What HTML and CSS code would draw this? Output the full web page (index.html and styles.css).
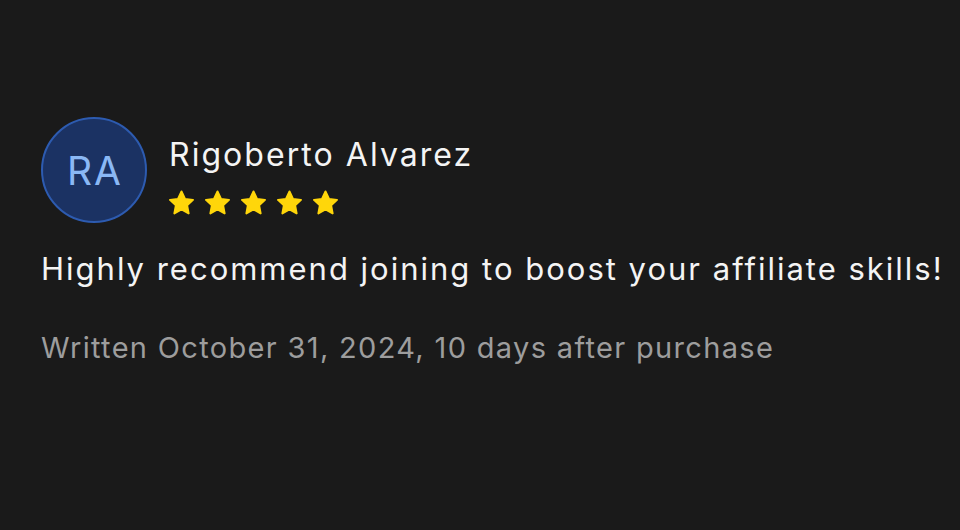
FILE: index.html
```html
<!DOCTYPE html>
<html>

<head>
  <title>Review</title>
  <link rel="stylesheet" href="styles.css">
</head>

<body>
  <div class="review">
    <div class="review-head">
      <div class="avatar">RA</div>
      <div class="author">
        <div class="author-name">Rigoberto Alvarez</div>
        <div class="stars">
          <svg class="star" viewBox="2 1.6 20 20"><path d="M12 2.8l2.8 5.9 6.4.8-4.7 4.4 1.2 6.4L12 17.1l-5.7 3.2 1.2-6.4-4.7-4.4 6.4-.8z"/></svg>
          <svg class="star" viewBox="2 1.6 20 20"><path d="M12 2.8l2.8 5.9 6.4.8-4.7 4.4 1.2 6.4L12 17.1l-5.7 3.2 1.2-6.4-4.7-4.4 6.4-.8z"/></svg>
          <svg class="star" viewBox="2 1.6 20 20"><path d="M12 2.8l2.8 5.9 6.4.8-4.7 4.4 1.2 6.4L12 17.1l-5.7 3.2 1.2-6.4-4.7-4.4 6.4-.8z"/></svg>
          <svg class="star" viewBox="2 1.6 20 20"><path d="M12 2.8l2.8 5.9 6.4.8-4.7 4.4 1.2 6.4L12 17.1l-5.7 3.2 1.2-6.4-4.7-4.4 6.4-.8z"/></svg>
          <svg class="star" viewBox="2 1.6 20 20"><path d="M12 2.8l2.8 5.9 6.4.8-4.7 4.4 1.2 6.4L12 17.1l-5.7 3.2 1.2-6.4-4.7-4.4 6.4-.8z"/></svg>
        </div>
      </div>
    </div>
    <p class="review-text">Highly recommend joining to boost your affiliate skills!</p>
    <p class="review-meta">Written October 31, 2024, 10 days after purchase</p>
  </div>
</body>

</html>
```

FILE: styles.css
```css
body {
  margin: 0;
  background-color: #1a1a1a;
  color: #f2f2f2;
  font-family: 'Inter', 'Noto Sans', sans-serif;
}

.review {
  padding: 117px 0 0 41px;
}

/* Header: avatar + name and stars */
.review-head {
  display: flex;
  align-items: flex-start;
  gap: 22px;
}

.avatar {
  width: 102px;
  height: 102px;
  border-radius: 50%;
  background-color: #1b3263;
  border: 2px solid #2d5bb0;
  color: #8ab8f5;
  font-size: 39px;
  letter-spacing: 2px;
  text-indent: 2px;
  display: flex;
  align-items: center;
  justify-content: center;
  flex-shrink: 0;
}

.author {
  margin-top: 19px;
}

.author-name {
  font-size: 32px;
  line-height: 38px;
  color: #f4f4f4;
  letter-spacing: 2.05px;
}

.stars {
  display: flex;
  gap: 11px;
  margin-top: 16px;
}

.star {
  width: 25px;
  height: 25px;
  fill: #ffd60a;
  stroke: #ffd60a;
  stroke-width: 1.6;
  stroke-linejoin: round;
}

/* Body */
.review-text {
  margin: 27px 0 0;
  font-size: 31px;
  line-height: 38px;
  letter-spacing: 2px;
  color: #f4f4f4;
  white-space: nowrap;
}

.review-meta {
  margin: 42px 0 0;
  font-size: 29px;
  line-height: 36px;
  letter-spacing: 1.33px;
  color: #9d9d9d;
  white-space: nowrap;
}
```
